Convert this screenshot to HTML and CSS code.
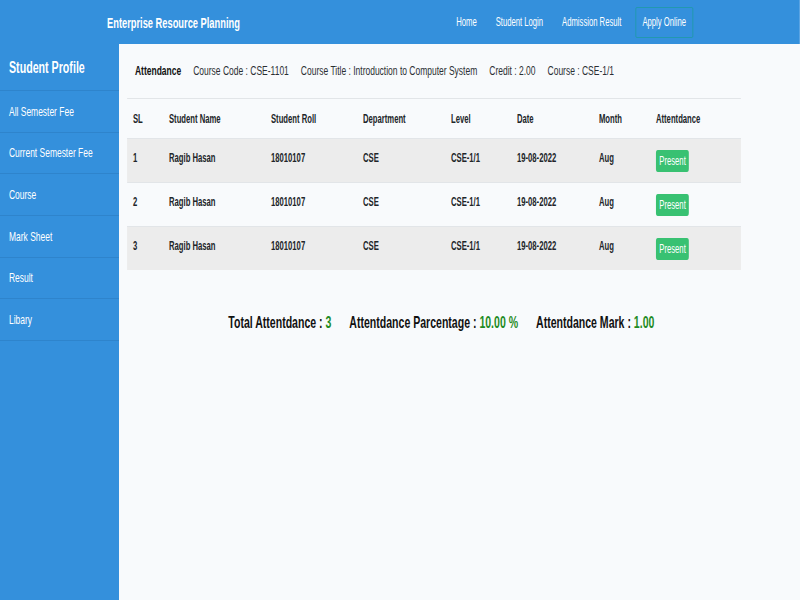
FILE: index.html
```html
<!DOCTYPE html>
<html lang="en">
<head>
<meta charset="utf-8">
<title>Enterprise Resource Planning</title>
<link rel="stylesheet" href="styles.css">
</head>
<body>
<div class="viewport">
<div class="page">
  <header class="topbar">
    <div class="brand">Enterprise Resource Planning</div>
    <nav class="nav">
      <a class="nav-link">Home</a>
      <a class="nav-link">Student Login</a>
      <a class="nav-link">Admission Result</a>
      <a class="nav-link nav-apply">Apply Online</a>
    </nav>
  </header>
  <div class="layout">
    <aside class="sidebar">
      <div class="side-title">Student Profile</div>
      <a class="side-item">All Semester Fee</a>
      <a class="side-item">Current Semester Fee</a>
      <a class="side-item">Course</a>
      <a class="side-item">Mark Sheet</a>
      <a class="side-item">Result</a>
      <a class="side-item">Libary</a>
    </aside>
    <main class="main">
      <div class="course-info">
        <span class="ci-title">Attendance</span>
        <span>Course Code : CSE-1101</span>
        <span>Course Title : Introduction to Computer System</span>
        <span>Credit : 2.00</span>
        <span>Course : CSE-1/1</span>
      </div>
      <div class="att-table" role="table">
        <div class="t-row t-head" role="row">
          <div role="columnheader">SL</div><div role="columnheader">Student Name</div>
          <div role="columnheader">Student Roll</div><div role="columnheader">Department</div>
          <div role="columnheader">Level</div><div role="columnheader">Date</div>
          <div role="columnheader">Month</div><div role="columnheader">Attentdance</div>
        </div>
        <div class="t-row striped" role="row">
          <div>1</div><div>Ragib Hasan</div><div>18010107</div><div>CSE</div>
          <div>CSE-1/1</div><div>19-08-2022</div><div>Aug</div><div><span class="badge">Present</span></div>
        </div>
        <div class="t-row" role="row">
          <div>2</div><div>Ragib Hasan</div><div>18010107</div><div>CSE</div>
          <div>CSE-1/1</div><div>19-08-2022</div><div>Aug</div><div><span class="badge">Present</span></div>
        </div>
        <div class="t-row striped" role="row">
          <div>3</div><div>Ragib Hasan</div><div>18010107</div><div>CSE</div>
          <div>CSE-1/1</div><div>19-08-2022</div><div>Aug</div><div><span class="badge">Present</span></div>
        </div>
      </div>
      <div class="totals">
        <span class="total-item">Total Attentdance : <span class="val">3</span></span>
        <span class="total-item">Attentdance Parcentage : <span class="val">10.00 %</span></span>
        <span class="total-item">Attentdance Mark : <span class="val">1.00</span></span>
      </div>
    </main>
  </div>
</div>
</div>
</body>
</html>
```

FILE: styles.css
```css
* { box-sizing: border-box; }

html, body {
  margin: 0;
  padding: 0;
  overflow: hidden;
  background: #f8fafc;
}

body {
  font-family: "Liberation Sans", Arial, sans-serif;
  color: #212529;
}

.viewport {
  width: 800px;
  height: 600px;
  overflow: hidden;
}

/* the reference is a wide layout compressed horizontally into 800px */
.page {
  width: 1290.323px;
  height: 600px;
  transform: scaleX(0.62);
  transform-origin: 0 0;
  display: flex;
  flex-direction: column;
}

.topbar {
  height: 44px;
  background: #3490dc;
  display: flex;
  align-items: center;
  justify-content: space-between;
  padding: 0 172.6px;
  flex: none;
}

.brand {
  color: #fff;
  font-weight: bold;
  font-size: 15px;
}

.nav {
  display: flex;
  align-items: center;
  gap: 8.6px;
}

.nav-link {
  color: #fff;
  font-size: 12.4px;
  line-height: 15px;
  padding: 0 11px;
}

.nav-apply {
  margin-left: 3px;
  padding: 7px 10.3px;
  border-style: solid;
  border-color: #1e9aa6;
  border-width: 1px 1.7px;
  border-radius: 2px;
}

.layout {
  flex: 1;
  display: flex;
}

.sidebar {
  width: 191.935px;
  flex: none;
  background: #3490dc;
  display: flex;
  flex-direction: column;
}

.side-title {
  height: 47px;
  display: flex;
  align-items: center;
  padding-left: 14.5px;
  color: #fff;
  font-weight: bold;
  font-size: 17.2px;
  border-bottom: 1px solid #2e84cc;
}

.side-item {
  height: 41.67px;
  display: flex;
  align-items: center;
  padding-left: 14.5px;
  color: #fff;
  font-size: 13.65px;
  border-bottom: 1px solid #2e84cc;
}

.main {
  flex: 1;
  background: #f8fafc;
  padding: 17px 12.903px 0 12.903px;
}

.course-info {
  display: flex;
  gap: 19.4px;
  padding-left: 12.9px;
  font-size: 13.7px;
  line-height: 20px;
  color: #2b2f33;
  margin-bottom: 17px;
}

.ci-title {
  font-weight: bold;
  color: #111;
}

.att-table {
  width: 990.323px;
  font-size: 12.4px;
  font-weight: bold;
  color: #212529;
}

.t-row {
  display: grid;
  grid-template-columns: 58.065px 164.516px 148.387px 141.935px 106.452px 132.258px 91.935px 146.774px;
  border-top: 1px solid #e2e5e8;
  padding: 10.5px 0 10.5px 0;
  line-height: 17px;
}

.t-row > div {
  padding-left: 9.7px;
}

.t-head {
  padding: 11.5px 0 11.5px 0;
  line-height: 16px;
}

.t-row.striped {
  background: #ececec;
}

.badge {
  display: inline-block;
  background: #38c172;
  color: #fff;
  font-weight: normal;
  font-size: 12.4px;
  line-height: 22px;
  padding: 0 5.4px;
  border-radius: 3px;
}

.totals {
  width: 990.323px;
  margin-top: 42px;
  padding-left: 23.7px;
  display: flex;
  justify-content: center;
  gap: 29px;
  font-size: 17px;
  font-weight: bold;
  line-height: 22px;
  color: #111;
}

.val {
  color: #1f8b24;
}
```
